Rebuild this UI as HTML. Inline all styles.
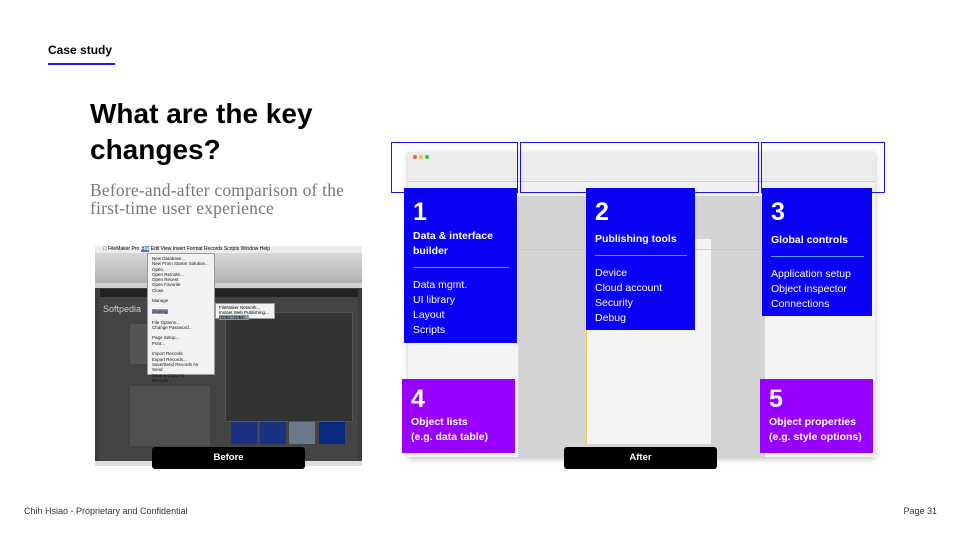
<!DOCTYPE html>
<html><head><meta charset="utf-8"><style>
*{margin:0;padding:0;box-sizing:border-box}
body{width:960px;height:540px;background:#fff;position:relative;overflow:hidden;font-family:"Liberation Sans",sans-serif;color:#000}
.a{position:absolute}
.box{position:absolute;color:#fff;padding:0 8px 0 9px}
.blue{background:#0a00f5}
.purp{background:#9900ff}
.num{font-size:25px;font-weight:bold;line-height:24px}
.hd{font-size:10.5px;font-weight:bold;line-height:15px;white-space:nowrap}
.ls{font-size:10.5px;line-height:15px;white-space:nowrap}
.rule{height:1px;background:#4aa0ff;margin:8px 0 10px}
.lab{position:absolute;background:#000;color:#fff;font-weight:bold;font-size:9.5px;text-align:center;line-height:22px;border-radius:3px}
.ol{position:absolute;border:1px solid #1a10f0}
</style></head><body>
<div class="a" style="left:48px;top:43px;font-size:12px;font-weight:bold">Case study</div>
<div class="a" style="left:48px;top:63px;width:67px;height:2px;background:#1a1aff"></div>
<div class="a" style="left:90px;top:96px;font-size:28px;font-weight:bold;line-height:36px;width:260px">What are the key changes?</div>
<div class="a" style="left:90px;top:181px;font-family:'Liberation Serif',serif;font-size:17.5px;line-height:18px;color:#777;letter-spacing:0.2px;white-space:nowrap">Before-and-after comparison of the<br>first-time user experience</div>

<!-- Before screenshot -->
<div class="a" style="left:95px;top:246px;width:267px;height:220px;background:#3c3c3c;overflow:hidden">
 <div class="a" style="left:0;top:0;width:267px;height:7px;background:#ececec;font-size:5px;line-height:7px;padding-left:8px">&#63743; FileMaker Pro <b style="background:#5470c0;color:#fff">File</b> Edit View Insert Format Records Scripts Window Help</div>
 <div class="a" style="left:0;top:7px;width:267px;height:30px;background:linear-gradient(#d8d8d8,#b0b0b0)"></div>
 <div class="a" style="left:0;top:37px;width:267px;height:5px;background:#cfcfcf"></div>
 <div class="a" style="left:4px;top:44px;width:259px;height:172px;background:#444"></div>
 <div class="a" style="left:5px;top:43px;width:258px;height:8px;background:#222"></div>
 <div class="a" style="left:8px;top:58px;color:#ccc;font-size:9px">Softpedia</div>
 <div class="a" style="left:130px;top:66px;width:128px;height:110px;background:#333;border:1px solid #555"></div>
 <div class="a" style="left:35px;top:78px;width:80px;height:40px;background:#555"></div>
 <div class="a" style="left:35px;top:140px;width:80px;height:60px;background:#505050"></div>
 <div class="a" style="left:136px;top:176px;width:26px;height:22px;background:#1a3080"></div>
 <div class="a" style="left:165px;top:176px;width:26px;height:22px;background:#1a3080"></div>
 <div class="a" style="left:194px;top:176px;width:26px;height:22px;background:#6a7a8a"></div>
 <div class="a" style="left:224px;top:176px;width:26px;height:22px;background:#0a2a80"></div>
 <div class="a" style="left:52px;top:7px;width:68px;height:122px;background:#f2f2f2;border:1px solid #999;font-size:4.5px;line-height:5.3px;padding:2px 4px;color:#111">New Database...<br>New From Starter Solution...<br>Open...<br>Open Remote...<br>Open Recent<br>Open Favorite<br>Close<br><br>Manage<br><br><span style="background:#8a9ab0">Sharing</span><br><br>File Options...<br>Change Password...<br><br>Page Setup...<br>Print...<br><br>Import Records<br>Export Records...<br>Save/Send Records As<br>Send<br>Save a Copy As...<br>Recover...</div>
 <div class="a" style="left:120px;top:57px;width:60px;height:16px;background:#f2f2f2;border:1px solid #999;font-size:4.5px;line-height:5px;padding:1px 3px">FileMaker Network...<br>Instant Web Publishing...<br><span style="background:#8a9ab0">ODBC/JDBC...</span></div>
 <div class="a" style="left:0;top:215px;width:267px;height:5px;background:#ddd"></div>
</div>
<div class="lab" style="left:152px;top:447px;width:153px">Before</div>

<!-- After screenshot -->
<div class="a" style="left:408px;top:152px;width:467px;height:305px;background:#d4d4d4;box-shadow:0 2px 6px rgba(0,0,0,.25);overflow:hidden">
 <div class="a" style="left:0;top:0;width:467px;height:30px;background:#ececec;border-bottom:1px solid #ccc"></div>
 <div class="a" style="left:5px;top:3px;width:4px;height:4px;border-radius:50%;background:#f55"></div>
 <div class="a" style="left:11px;top:3px;width:4px;height:4px;border-radius:50%;background:#fb3"></div>
 <div class="a" style="left:17px;top:3px;width:4px;height:4px;border-radius:50%;background:#3c4"></div>
 <div class="a" style="left:0;top:30px;width:110px;height:275px;background:#f4f4f4"></div>
 <div class="a" style="left:357px;top:30px;width:110px;height:275px;background:#f4f4f4"></div>
 <div class="a" style="left:0;top:30px;width:467px;height:14px;background:#f0f0f0"></div>
 <div class="a" style="left:178px;top:87px;width:125px;height:205px;background:#f4f4f4;border-left:1px solid #e8d060"></div>
 <div class="a" style="left:110px;top:97px;width:247px;height:1px;background:#e8d060"></div>
</div>
<div class="ol" style="left:391px;top:142px;width:127px;height:51px"></div>
<div class="ol" style="left:520px;top:142px;width:239px;height:51px"></div>
<div class="ol" style="left:761px;top:142px;width:124px;height:51px"></div>

<div class="box blue" style="left:404px;top:188px;width:113px;height:155px;padding-top:12px">
 <div class="num">1</div><div class="hd" style="margin-top:5px">Data &amp; interface<br>builder</div><div class="rule"></div>
 <div class="ls">Data mgmt.<br>UI library<br>Layout<br>Scripts</div></div>
<div class="box blue" style="left:586px;top:188px;width:109px;height:142px;padding-top:12px">
 <div class="num">2</div><div class="hd" style="margin-top:8px">Publishing tools</div><div class="rule"></div>
 <div class="ls">Device<br>Cloud account<br>Security<br>Debug</div></div>
<div class="box blue" style="left:762px;top:188px;width:110px;height:128px;padding-top:12px">
 <div class="num">3</div><div class="hd" style="margin-top:9px">Global controls</div><div class="rule"></div>
 <div class="ls">Application setup<br>Object inspector<br>Connections</div></div>
<div class="box purp" style="left:402px;top:379px;width:113px;height:74px;padding-top:8px">
 <div class="num">4</div><div class="hd" style="margin-top:4px">Object lists<br>(e.g. data table)</div></div>
<div class="box purp" style="left:760px;top:379px;width:113px;height:74px;padding-top:8px">
 <div class="num">5</div><div class="hd" style="margin-top:4px">Object properties<br>(e.g. style options)</div></div>
<div class="lab" style="left:564px;top:447px;width:153px">After</div>

<div class="a" style="left:24px;top:506px;font-size:9px;color:#333">Chih Hsiao - Proprietary and Confidential</div>
<div class="a" style="right:23px;top:506px;font-size:9px;color:#333">Page 31</div>
</body></html>
